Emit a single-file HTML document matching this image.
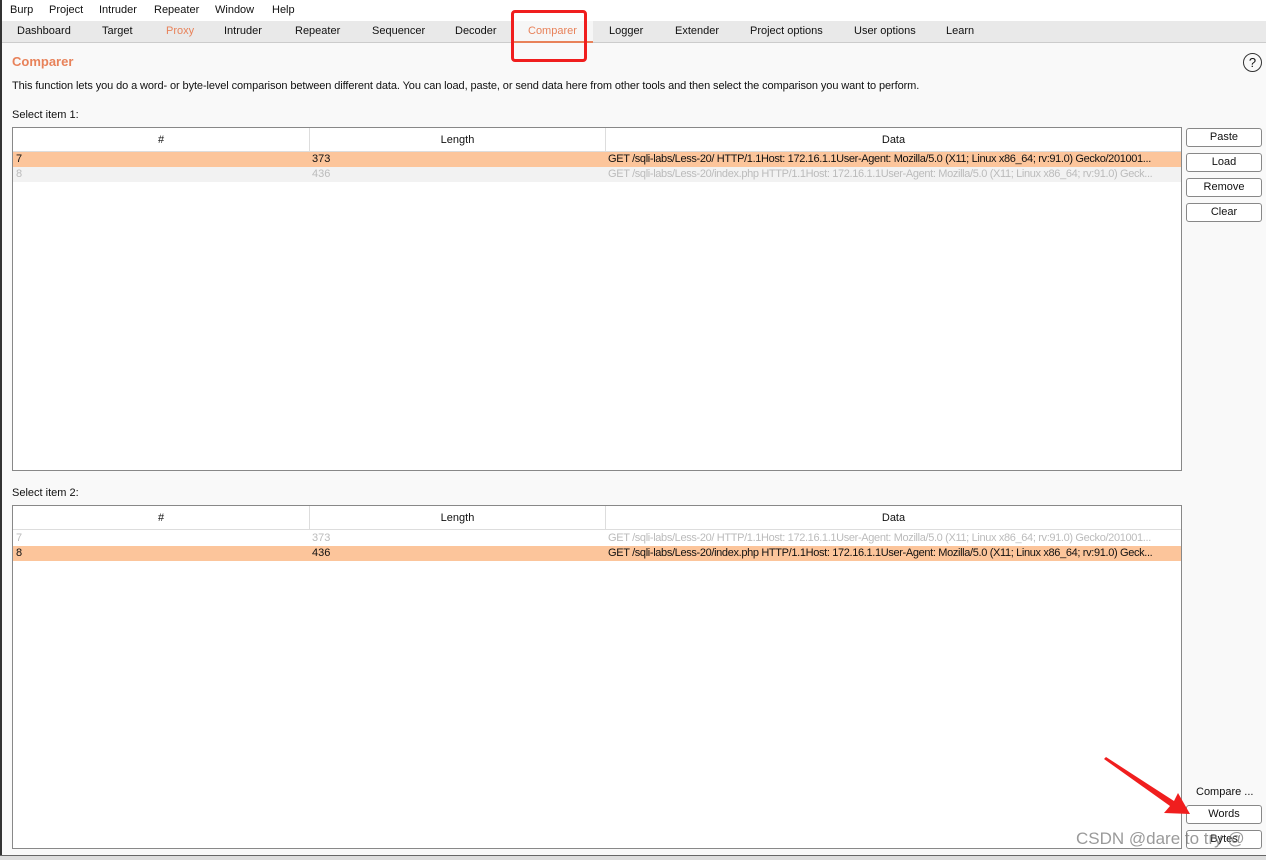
<!DOCTYPE html>
<html><head><style>
*{margin:0;padding:0;box-sizing:border-box}
body{width:1266px;height:860px;background:#f9f9f9;font-family:"Liberation Sans",sans-serif;font-size:11px;color:#111;position:relative;overflow:hidden}
.a{position:absolute;white-space:nowrap}
.tab{position:absolute;top:25px;font-size:11px}
.tbl{position:absolute;left:12px;width:1170px;background:#fff;border:1px solid #888;overflow:hidden}
.hd{position:absolute;top:0;height:24px;line-height:24px;text-align:center;border-right:1px solid #ddd;border-bottom:1px solid #ddd}
.row{position:absolute;left:0;width:1168px;height:15px;line-height:15px;overflow:hidden;white-space:nowrap}
.row span{position:absolute;top:0;white-space:nowrap}
.row span.d{letter-spacing:-0.35px;width:570px;overflow:hidden}
.btn{position:absolute;left:1186px;width:76px;height:19px;border:1px solid #888;border-radius:3px;background:#fff;text-align:center;line-height:17px}
</style></head><body>
<div class="a" style="left:0;top:0;width:2px;height:860px;background:#333"></div>
<div class="a" style="left:2px;top:0;width:1264px;height:21px;background:#fff"></div>
<div class="a" style="left:10px;top:4px">Burp</div>
<div class="a" style="left:49px;top:4px">Project</div>
<div class="a" style="left:99px;top:4px">Intruder</div>
<div class="a" style="left:154px;top:4px">Repeater</div>
<div class="a" style="left:215px;top:4px">Window</div>
<div class="a" style="left:272px;top:4px">Help</div>
<div class="a" style="left:2px;top:21px;width:1264px;height:22px;background:#e9e9e9;border-bottom:1px solid #ccc"></div>
<div class="tab" style="left:17px">Dashboard</div>
<div class="tab" style="left:102px">Target</div>
<div class="tab" style="left:166px;color:#e8825a">Proxy</div>
<div class="tab" style="left:224px">Intruder</div>
<div class="tab" style="left:295px">Repeater</div>
<div class="tab" style="left:372px">Sequencer</div>
<div class="tab" style="left:455px">Decoder</div>
<div class="a" style="left:513px;top:21px;width:80px;height:22px;background:#f6f6f6;border-bottom:2px solid #e8825a"></div>
<div class="tab" style="left:528px;color:#e8825a">Comparer</div>
<div class="tab" style="left:609px">Logger</div>
<div class="tab" style="left:675px">Extender</div>
<div class="tab" style="left:750px">Project options</div>
<div class="tab" style="left:854px">User options</div>
<div class="tab" style="left:946px">Learn</div>
<div class="a" style="left:511px;top:10px;width:76px;height:52px;border:3px solid #f01e1e;border-radius:4px"></div>
<div class="a" style="left:12px;top:54px;font-size:13px;font-weight:bold;color:#e8825a">Comparer</div>
<div class="a" style="left:1243px;top:53px;width:19px;height:19px;border:1.3px solid #333;border-radius:50%;text-align:center;line-height:17px;font-size:13px">?</div>
<div class="a" style="left:12px;top:80px;letter-spacing:-0.1px">This function lets you do a word- or byte-level comparison between different data. You can load, paste, or send data here from other tools and then select the comparison you want to perform.</div>
<div class="a" style="left:12px;top:109px">Select item 1:</div>
<div class="tbl" style="top:127px;height:344px">
<div class="hd" style="left:0;width:297px">#</div>
<div class="hd" style="left:297px;width:296px">Length</div>
<div class="hd" style="left:593px;width:575px;border-right:0">Data</div>
<div class="row" style="top:24px;background:#fcc59b"><span style="left:3px">7</span><span style="left:299px">373</span><span class="d" style="left:595px">GET /sqli-labs/Less-20/ HTTP/1.1Host: 172.16.1.1User-Agent: Mozilla/5.0 (X11; Linux x86_64; rv:91.0) Gecko/201001...</span></div>
<div class="row" style="top:39px;background:#f2f2f2;color:#bbb"><span style="left:3px">8</span><span style="left:299px">436</span><span class="d" style="left:595px">GET /sqli-labs/Less-20/index.php HTTP/1.1Host: 172.16.1.1User-Agent: Mozilla/5.0 (X11; Linux x86_64; rv:91.0) Geck...</span></div>
</div>
<div class="btn" style="top:128px">Paste</div>
<div class="btn" style="top:153px">Load</div>
<div class="btn" style="top:178px">Remove</div>
<div class="btn" style="top:203px">Clear</div>
<div class="a" style="left:12px;top:487px">Select item 2:</div>
<div class="tbl" style="top:505px;height:344px">
<div class="hd" style="left:0;width:297px">#</div>
<div class="hd" style="left:297px;width:296px">Length</div>
<div class="hd" style="left:593px;width:575px;border-right:0">Data</div>
<div class="row" style="top:25px;color:#bbb"><span style="left:3px">7</span><span style="left:299px">373</span><span class="d" style="left:595px">GET /sqli-labs/Less-20/ HTTP/1.1Host: 172.16.1.1User-Agent: Mozilla/5.0 (X11; Linux x86_64; rv:91.0) Gecko/201001...</span></div>
<div class="row" style="top:40px;background:#fcc59b"><span style="left:3px">8</span><span style="left:299px">436</span><span class="d" style="left:595px">GET /sqli-labs/Less-20/index.php HTTP/1.1Host: 172.16.1.1User-Agent: Mozilla/5.0 (X11; Linux x86_64; rv:91.0) Geck...</span></div>
</div>
<div class="a" style="left:1196px;top:786px">Compare ...</div>
<div class="btn" style="top:805px">Words</div>
<div class="btn" style="top:830px">Bytes</div>
<div class="a" style="left:0;top:855px;width:1266px;height:5px;background:#ddd;border-top:1px solid #666"></div>
<svg class="a" style="left:1100px;top:755px" width="95" height="65"><polygon points="4,4 6,2 74,46 78,38 90,59 64,58 70,51" fill="#f01e1e"/></svg>
<div class="a" style="left:1076px;top:829px;font-size:17px;color:rgba(120,120,120,0.75)">CSDN @dare to try @</div>
</body></html>
